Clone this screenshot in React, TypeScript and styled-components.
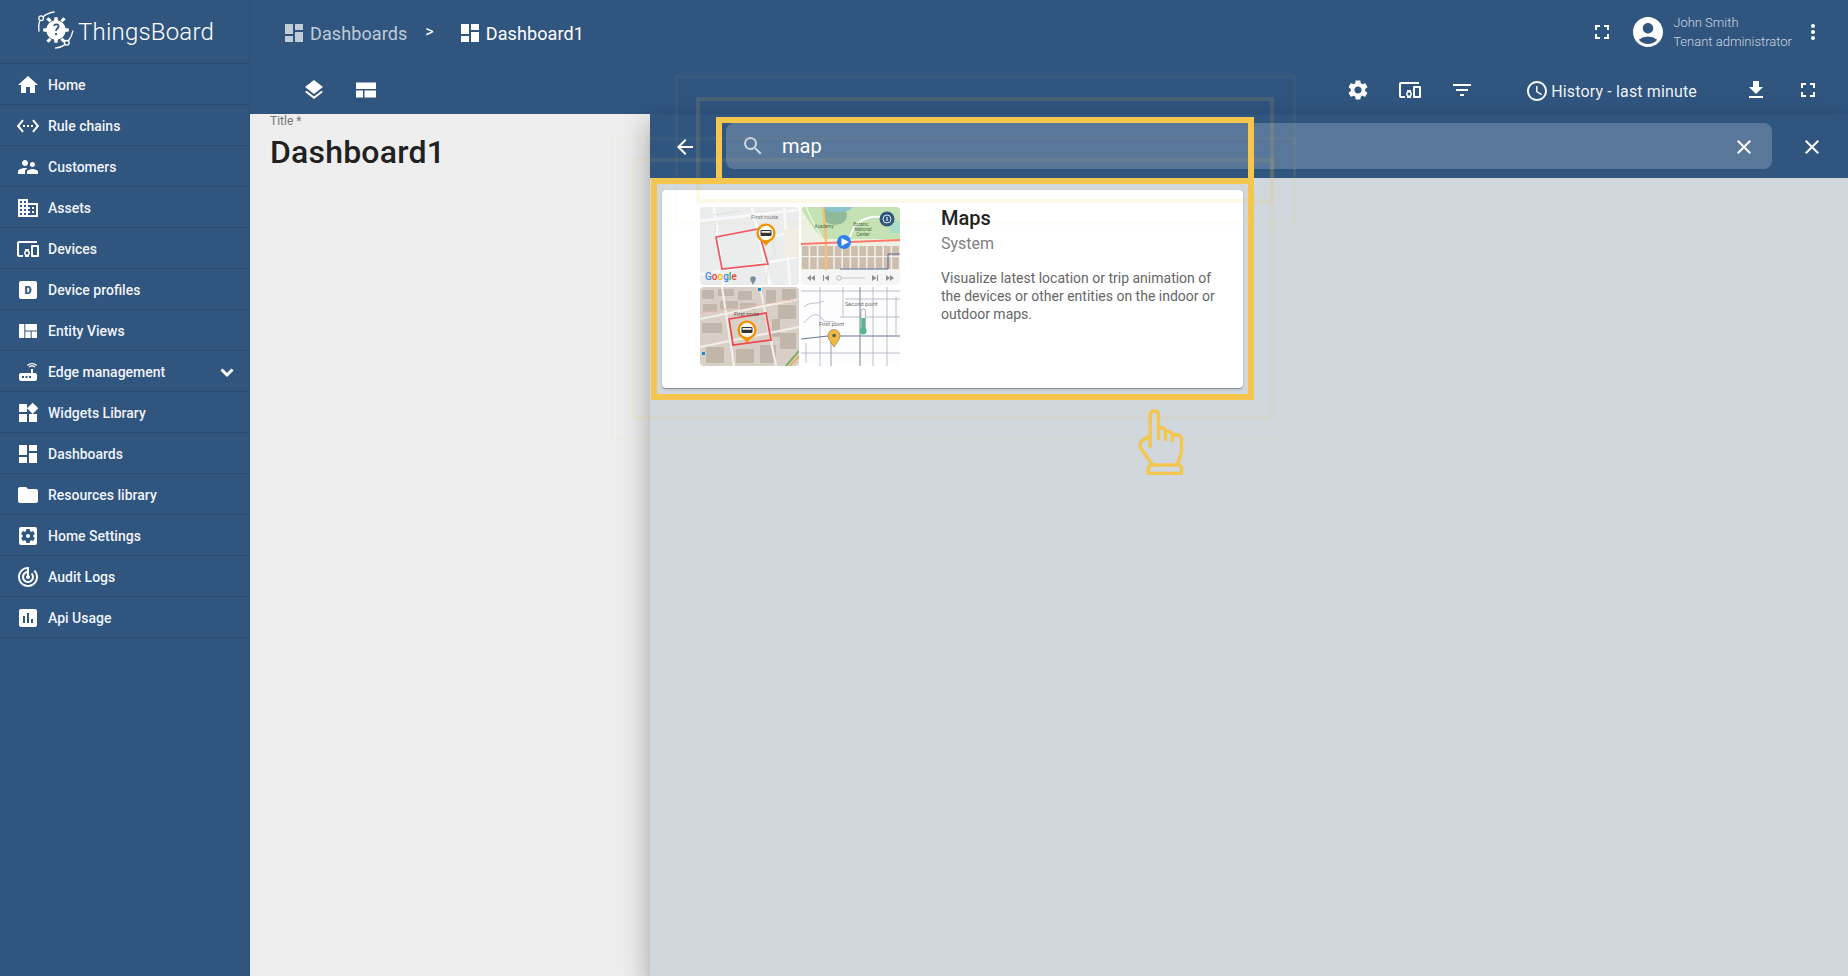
import React, { FC } from 'react';
import styled, { createGlobalStyle } from 'styled-components';
import {
  MdHome, MdSettingsEthernet, MdSupervisorAccount, MdDomain, MdDevicesOther, MdViewQuilt, MdRouter,
  MdWidgets, MdDashboard, MdFolder, MdSettingsApplications, MdTrackChanges, MdInsertChart,
  MdFullscreen, MdAccountCircle, MdMoreVert, MdLayers, MdSettings, MdFilterList, MdAccessTime,
  MdFileDownload, MdSearch, MdClose, MdArrowBack,
} from 'react-icons/md';

const primary = '#305680';
const yellow = '#f4c64d';

const GlobalStyle = createGlobalStyle`
  html, body {
    margin: 0;
    height: 100%;
    overflow: hidden;
    font-family: Roboto, "Helvetica Neue", sans-serif;
  }
`;

const LogoMark: FC = () => (
  <svg width="38" height="38" viewBox="0 0 37 37" fill="none" stroke="#fff" strokeWidth="1.3">
    <circle cx="4" cy="7" r="2.3" />
    <path d="M6 5.5 C9 3 13 1.5 17 1" />
    <path d="M2.6 9.5 C1.5 13 1.4 17 2 20" />
    <circle cx="29" cy="31" r="2.3" />
    <path d="M27 33 C24 35 21 36 17.5 36.2" />
    <path d="M30.6 29 C33 26 34.4 23 35 19" />
    <g fill="#fff" stroke="none">
      <circle cx="18.5" cy="18.5" r="9.5" />
      <path d="M17 6h3l.5 4h-4z M17 31h3l.5-4h-4z M6 17v3l4 .5v-4z M31 17v3l-4 .5v-4z M9 8l2.3-2 3 3-2.3 2z M28 29l-2.3 2-3-3 2.3-2z M28 8l-2.3-2-3 3 2.3 2z M9 29l2.3 2 3-3-2.3-2z" />
    </g>
    <path d="M16.5 14.5 C17 12.5 21 12.5 21 15 C21 17 18.5 17 18.5 19.5 M18.5 21.5v2" stroke={primary} strokeWidth="1.8" />
  </svg>
);

const LayoutIcon: FC = () => (
  <svg width="24" height="24" viewBox="0 0 24 24" fill="#fff">
    <rect x="2" y="4.5" width="20" height="6.5" />
    <rect x="2" y="12.5" width="7" height="7" />
    <rect x="10.5" y="12.5" width="11.5" height="7" />
  </svg>
);

const ChevronIcon: FC = () => (
  <svg width="24" height="24" viewBox="0 0 24 24" fill="none" stroke="#fff" strokeWidth="3">
    <path d="M6.5 9.5 L12 15 L17.5 9.5" />
  </svg>
);

const HandIcon: FC = () => (
  <svg width="46" height="67" viewBox="-1.5 -1.5 46 67" fill="none" stroke={yellow} strokeWidth="3.4" strokeLinecap="round" strokeLinejoin="round">
    <path d="M10.7 37 V5 A4.2 4.2 0 0 1 19 5 V29" />
    <path d="M19 19 C21 17 26 18 26 22 V30" />
    <path d="M26 23 C28 21 33 22 33 26 V31" />
    <path d="M33 26 C35 24 42 25 42 30 V42 L38 55" />
    <path d="M10.7 26 L3 31 C0 33 0 37 2 40 L13 55" />
    <path d="M11 55.5 H40 L42 58 V64 H9 V58 Z" />
  </svg>
);

// small bus glyph inside the orange map pins
const BusPin: FC<{ x: number; y: number }> = ({ x, y }) => (
  <g>
    <path d={`M${x - 4} ${y + 8} L${x} ${y + 13} L${x + 4} ${y + 8} Z`} fill="#f39200" />
    <circle cx={x} cy={y} r="8.4" fill="#fff" stroke="#f39200" strokeWidth="2.4" />
    <rect x={x - 5.5} y={y - 3} width="11" height="6" rx="1" fill="#333" />
    <rect x={x - 4.5} y={y - 2} width="9" height="1.8" fill="#eee" />
  </g>
);

const houses = Array.from({ length: 12 }, (_, i) => i);
const blocks3 = [
  [2, 83, 12, 9], [18, 82, 16, 7], [38, 84, 14, 9], [66, 83, 10, 14], [82, 82, 14, 11],
  [3, 97, 14, 8], [20, 94, 18, 8], [40, 96, 16, 7], [78, 98, 18, 14], [2, 116, 20, 10],
  [36, 142, 18, 14], [60, 138, 16, 18], [80, 126, 16, 16], [6, 140, 18, 16], [72, 112, 8, 18],
];

const MapsPreview: FC = () => (
  <svg width="200" height="159" viewBox="0 0 200 159" fontFamily="Roboto, sans-serif">
    <defs>
      <clipPath id="t1"><rect width="99" height="78" rx="4" /></clipPath>
      <clipPath id="t2"><rect x="101" width="99" height="78" rx="4" /></clipPath>
      <clipPath id="t3"><rect y="80" width="99" height="79" rx="4" /></clipPath>
      <clipPath id="t4"><rect x="101" y="80" width="99" height="79" rx="4" /></clipPath>
      <filter id="soft"><feGaussianBlur stdDeviation="0.35" /></filter>
    </defs>

    <g clipPath="url(#t1)">
      <rect width="99" height="78" fill="#ebecec" />
      <g filter="url(#soft)">
        <g stroke="#f9f9f9" strokeWidth="2.6" fill="none">
          <path d="M-2 14 L99 3" />
          <path d="M-2 68 L99 50" />
          <path d="M14 0 L24 78" />
          <path d="M52 0 L70 78" />
          <path d="M70 30 L99 24" />
          <path d="M84 0 L90 78" />
        </g>
        <rect x="84" y="22" width="15" height="28" fill="#f3ece2" />
        <g stroke="#cfcfcf" strokeWidth=".7" strokeDasharray="2 1" fill="none">
          <path d="M14 8 L40 4" />
          <path d="M68 62 L66 74" />
          <path d="M72 32 L76 48" />
          <path d="M15 14 L16 26" />
        </g>
      </g>
      <text x="51" y="12" fontSize="6" fill="#7c7c7c">First route</text>
      <path d="M16 30 L58 22 L68 57 L22 62 Z" fill="none" stroke="#f2555d" strokeWidth="1.7" />
      <BusPin x={66} y={26} />
      <text x="5" y="73" fontSize="10" fontWeight="500">
        <tspan fill="#4285f4">G</tspan><tspan fill="#ea4335">o</tspan><tspan fill="#fbbc05">o</tspan><tspan fill="#4285f4">g</tspan><tspan fill="#34a853">l</tspan><tspan fill="#ea4335">e</tspan>
      </text>
      <circle cx="53" cy="72" r="2.8" fill="#78909c" />
      <path d="M50.7 73.5 L53 78 L55.3 73.5 Z" fill="#78909c" />
    </g>

    <g clipPath="url(#t2)">
      <rect x="101" width="99" height="78" fill="#f5f5f5" />
      <rect x="101" width="99" height="63" fill="#eef0e4" />
      <g filter="url(#soft)">
        <path d="M101 0 H200 V32 H122 C116 24 106 12 101 0 Z" fill="#c4e2b4" />
        <path d="M124 2 C134 -2 148 1 147 9 C146 20 128 20 123 12 Z" fill="#8fb99a" />
        <path d="M122 0 H152 C150 6 134 6 128 4 Z" fill="#8ac4cf" />
        <path d="M190 14 H200 V26 H190 Z" fill="#a9dcc8" />
        <path d="M106 0 C112 14 118 24 124 34" stroke="#fff" strokeWidth="1" fill="none" />
        <g fill="#cdbdae">
          {houses.map(i => (
            <rect key={i} x={102 + i * 8.2} y="39" width="6.6" height="23" />
          ))}
        </g>
        <rect x="101" y="49" width="99" height="1.2" fill="#f2efe8" />
      </g>
      <path d="M150 30 C154 16 162 12 172 10 C178 9 184 10 186 14" stroke="#fff" strokeWidth="1.8" fill="none" />
      <path d="M123 0 C124 14 126 24 126 36 V63" stroke="#f6bf75" strokeWidth="2.4" fill="none" />
      <path d="M101 37 L200 33" stroke="#fb7a6b" strokeWidth="2" />
      <path d="M140 62 H188 V47 H200" stroke="#5b6d98" strokeWidth="1" fill="none" />
      <g fontSize="4.6" fill="#4d6a46" textAnchor="middle">
        <text x="124" y="21">Academy</text>
        <text x="161" y="19">Botanic</text>
        <text x="163" y="24">National</text>
        <text x="163" y="29">Center</text>
      </g>
      <circle cx="144" cy="35" r="7" fill="#2d7ff0" />
      <path d="M141.5 31 L149 35 L141.5 39 Z" fill="#fff" />
      <circle cx="187" cy="12" r="7.5" fill={primary} />
      <circle cx="187" cy="12" r="4" fill="none" stroke="#dfe6ee" strokeWidth="1" />
      <rect x="186.4" y="10" width="1.2" height="4" fill="#dfe6ee" />
      <g fill="#8a9096">
        <path d="M107 71 L111 68 V74 Z M111 71 L115 68 V74 Z" />
        <path d="M123 68 H124 V74 H123 Z M124.5 71 L129 68 V74 Z" />
        <path d="M172 68 L176.5 71 L172 74 Z M177 68 H178 V74 H177 Z" />
        <path d="M186 68 L190 71 L186 74 Z M190 68 L194 71 L190 74 Z" />
      </g>
      <circle cx="139" cy="71" r="2.3" fill="none" stroke="#a8adb2" strokeWidth=".8" />
      <path d="M141.5 71 H165" stroke="#b5babf" strokeWidth=".8" />
    </g>

    <g clipPath="url(#t3)">
      <rect y="80" width="99" height="79" fill="#d8d0c6" />
      <g filter="url(#soft)">
        <g fill="#c0b6aa">
          {blocks3.map(([x, y, w, h]) => (
            <rect key={`${x}-${y}`} x={x} y={y} width={w} height={h} rx="1" />
          ))}
        </g>
        <g stroke="#f2efeb" strokeWidth="2.2" fill="none">
          <path d="M0 112 L99 92" />
          <path d="M0 140 L99 120" />
          <path d="M22 80 L34 159" />
          <path d="M60 80 L76 159" />
        </g>
      </g>
      <path d="M0 106 L99 92" stroke="#eeb9ad" strokeWidth="1" strokeDasharray="3 1" />
      <path d="M29 112 L66 106 L71 133 L33 138 Z" fill="none" stroke="#f2454f" strokeWidth="1.7" />
      <BusPin x={47} y={123} />
      <rect x="58" y="81" width="3" height="3" fill="#0f8fe0" />
      <rect x="2" y="145" width="3" height="3" fill="#0f8fe0" />
      <path d="M86 159 L99 144" stroke="#7fae5e" strokeWidth="2" />
      <path d="M90 159 L99 149" stroke="#e3a948" strokeWidth="1.5" />
      <text x="34" y="109" fontSize="5.5" fill="#5e554c">First route</text>
    </g>

    <g clipPath="url(#t4)">
      <rect x="101" y="80" width="99" height="79" fill="#fdfdfe" />
      <g stroke="#a9aec6" strokeWidth=".8" fill="none" filter="url(#soft)">
        <path d="M101 84 H200" />
        <path d="M140 110 H200" />
        <path d="M101 146 H200" />
        <path d="M145 92 H200" />
        <path d="M120 80 V159" />
        <path d="M143 80 V110" />
        <path d="M173 80 V159" />
        <path d="M187 80 V159" />
        <path d="M196 90 V128" />
        <path d="M104 116 C110 108 118 104 122 112 C128 118 132 112 136 116" />
        <path d="M104 100 C110 94 116 98 124 94" />
        <path d="M106 136 V156" />
      </g>
      <path d="M101 132 L128 129 H200" stroke="#68778e" strokeWidth="1.1" fill="none" />
      <path d="M160 80 V159" stroke="#7b8496" strokeWidth="1" />
      <path d="M131 135 V159" stroke="#9aa0b4" strokeWidth="1" />
      <text x="145" y="99" fontSize="5.6" fill="#6a6a6a">Second point</text>
      <text x="119" y="119" fontSize="5.6" fill="#6a6a6a">First point</text>
      <rect x="161" y="102" width="4.4" height="22" rx="2.2" fill="#fff" stroke="#8a8f98" strokeWidth=".7" />
      <rect x="161.4" y="111" width="3.6" height="13" fill="#53b88b" />
      <circle cx="163.2" cy="124" r="3.4" fill="#53b88b" />
      <path d="M134 140 C130 134 128 132 128 128.5 A6 6 0 0 1 140 128.5 C140 132 138 134 134 140 Z" fill="#f0b93c" stroke="#5d5d5d" strokeWidth=".5" />
      <circle cx="134" cy="128.5" r="1.8" fill="#5a5a5a" />
    </g>
  </svg>
);

function LetterIcon({ children }: { children: React.ReactNode }) {
  return <LetterBox>{children}</LetterBox>;
}

const menu = [
  { label: 'Home', icon: <MdHome /> },
  { label: 'Rule chains', icon: <MdSettingsEthernet /> },
  { label: 'Customers', icon: <MdSupervisorAccount /> },
  { label: 'Assets', icon: <MdDomain /> },
  { label: 'Devices', icon: <MdDevicesOther /> },
  { label: 'Device profiles', icon: <LetterIcon>D</LetterIcon> },
  { label: 'Entity Views', icon: <MdViewQuilt /> },
  { label: 'Edge management', icon: <MdRouter />, arrow: true },
  { label: 'Widgets Library', icon: <MdWidgets /> },
  { label: 'Dashboards', icon: <MdDashboard /> },
  { label: 'Resources library', icon: <MdFolder /> },
  { label: 'Home Settings', icon: <MdSettingsApplications /> },
  { label: 'Audit Logs', icon: <MdTrackChanges /> },
  { label: 'Api Usage', icon: <MdInsertChart /> },
];

const App: FC = () => {
  return (
    <Wrapper>
      <GlobalStyle />
      <Sidebar>
        <LogoRow>
          <LogoMark />
          <LogoText>ThingsBoard</LogoText>
        </LogoRow>
        {menu.map(item => (
          <MenuRow key={item.label}>
            <MenuIcon>{item.icon}</MenuIcon>
            <MenuLabel>{item.label}</MenuLabel>
            {item.arrow && <MenuArrow><ChevronIcon /></MenuArrow>}
          </MenuRow>
        ))}
      </Sidebar>

      <Main>
        <TopBar>
          <Crumb $dim><MdDashboard />Dashboards</Crumb>
          <CrumbSep>&gt;</CrumbSep>
          <Crumb><MdDashboard />Dashboard1</Crumb>
          <TopRight>
            <IconBtn><MdFullscreen /></IconBtn>
            <Avatar><MdAccountCircle /></Avatar>
            <UserInfo>
              <UserName>John Smith</UserName>
              <UserName>Tenant administrator</UserName>
            </UserInfo>
            <MoreBtn><MdMoreVert /></MoreBtn>
          </TopRight>
        </TopBar>

        <ToolBar>
          <ToolLeft>
            <IconBtn><MdLayers /></IconBtn>
            <IconBtn><LayoutIcon /></IconBtn>
          </ToolLeft>
          <ToolRight>
            <IconBtn><MdSettings /></IconBtn>
            <IconBtn><MdDevicesOther /></IconBtn>
            <IconBtn><MdFilterList /></IconBtn>
            <History><MdAccessTime />History - last minute</History>
            <IconBtn><MdFileDownload /></IconBtn>
            <IconBtn><MdFullscreen /></IconBtn>
          </ToolRight>
        </ToolBar>

        <Body>
          <TitlePanel>
            <TitleLabel>Title *</TitleLabel>
            <TitleValue>Dashboard1</TitleValue>
          </TitlePanel>

          <WidgetPanel>
            <SearchBar>
              <SearchBtn><MdArrowBack /></SearchBtn>
              <SearchField>
                <SearchIcon><MdSearch /></SearchIcon>
                <SearchText>map</SearchText>
                <SearchBtn><MdClose /></SearchBtn>
              </SearchField>
              <SearchBtn><MdClose /></SearchBtn>
            </SearchBar>
            <Results>
              <Card>
                <CardImage><MapsPreview /></CardImage>
                <CardInfo>
                  <CardTitle>Maps</CardTitle>
                  <CardSource>System</CardSource>
                  <CardText>Visualize latest location or trip animation of the devices or other entities on the indoor or outdoor maps.</CardText>
                </CardInfo>
              </Card>
            </Results>
          </WidgetPanel>
        </Body>
      </Main>

      <Spot $x={675} $y={75} $w={621} $h={150} $line={3} $alpha={0.045} />
      <Spot $x={610} $y={137} $w={686} $h={304} $line={3} $alpha={0.045} />
      <Spot $x={696} $y={97} $w={578} $h={106} $line={4} $alpha={0.12} />
      <Spot $x={632} $y={158} $w={642} $h={262} $line={4} $alpha={0.09} />
      <Spot $x={716} $y={117} $w={538} $h={67} $line={6} $alpha={1} />
      <Spot $x={651} $y={178} $w={603} $h={222} $line={6} $alpha={1} />
      <Hand><HandIcon /></Hand>
    </Wrapper>
  );
};

const Wrapper = styled.div`
    position: relative;
    display: flex;
    width: 1848px;
    height: 976px;
    overflow: hidden;
    background: ${primary};
    color: #fff;
  `,
  Sidebar = styled.aside`
    flex: none;
    width: 250px;
    box-sizing: border-box;
    border-right: 1px solid rgba(0, 0, 0, 0.08);
    background: ${primary};
  `,
  LogoRow = styled.div`
    display: flex;
    align-items: center;
    height: 64px;
    box-sizing: border-box;
    padding: 0 0 4px 37px;
    border-bottom: 1px solid rgba(0, 0, 0, 0.12);
  `,
  LogoText = styled.span`
    margin: 4px 0 0 3px;
    font-size: 24px;
    font-weight: 300;
    letter-spacing: 0.2px;
  `,
  MenuRow = styled.div`
    display: flex;
    align-items: center;
    height: 41px;
    box-sizing: border-box;
    padding: 2px 16px 0;
    border-bottom: 1px solid rgba(0, 0, 0, 0.12);
  `,
  MenuIcon = styled.span`
    display: flex;
    align-items: center;
    justify-content: center;
    width: 24px;
    height: 24px;
    margin-right: 8px;
    font-size: 24px;
  `,
  LetterBox = styled.span`
    display: flex;
    align-items: center;
    justify-content: center;
    width: 18px;
    height: 18px;
    border-radius: 2px;
    background: #fff;
    color: ${primary};
    font-size: 11px;
    font-weight: 900;
  `,
  MenuLabel = styled.span`
    flex: 1;
    font-size: 14px;
    font-weight: 500;
    color: rgba(255, 255, 255, 0.95);
  `,
  MenuArrow = styled.span`
    display: flex;
    margin-right: -6px;
  `,
  Main = styled.div`
    flex: 1;
    display: flex;
    flex-direction: column;
    min-width: 0;
  `,
  TopBar = styled.header`
    display: flex;
    align-items: center;
    height: 64px;
    flex: none;
    box-sizing: border-box;
    padding: 2px 23px 0 32px;
  `,
  Crumb = styled.div<{ $dim?: boolean }>`
    display: flex;
    align-items: center;
    gap: 4px;
    font-size: 18px;
    letter-spacing: 0.1px;
    color: ${props => props.$dim ? 'rgba(255, 255, 255, 0.7)' : '#fff'};
    svg {
      width: 24px;
      height: 24px;
    }
  `,
  CrumbSep = styled.span`
    margin: -4px 24px 0 18px;
    font-size: 16px;
    color: #fff;
  `,
  TopRight = styled.div`
    display: flex;
    align-items: center;
    margin-left: auto;
    margin-top: -2px;
  `,
  IconBtn = styled.span`
    display: flex;
    align-items: center;
    justify-content: center;
    flex: none;
    width: 52px;
    height: 40px;
    font-size: 24px;
  `,
  SearchBtn = styled(IconBtn)`
    padding-top: 2px;
  `,
  Avatar = styled.span`
    display: flex;
    margin-left: 2px;
    font-size: 36px;
  `,
  UserInfo = styled.div`
    display: flex;
    flex-direction: column;
    gap: 2px;
    margin-left: 7px;
  `,
  UserName = styled.span`
    font-size: 13px;
    font-weight: 300;
    line-height: 17px;
    color: rgba(255, 255, 255, 0.75);
  `,
  MoreBtn = styled.span`
    display: flex;
    margin: 0 0 0 9px;
    font-size: 24px;
  `,
  ToolBar = styled.div`
    display: flex;
    align-items: center;
    height: 50px;
    flex: none;
    box-sizing: border-box;
    padding: 2px 14px 0 38px;
  `,
  ToolLeft = styled.div`
    display: flex;
    align-items: center;
  `,
  ToolRight = styled.div`
    display: flex;
    align-items: center;
    margin-left: auto;
  `,
  History = styled.div`
    display: flex;
    align-items: center;
    gap: 2px;
    margin: 2px 33px 0 37px;
    font-size: 16px;
    letter-spacing: 0.15px;
    color: rgba(255, 255, 255, 0.95);
    svg {
      width: 24px;
      height: 24px;
    }
  `,
  Body = styled.div`
    flex: 1;
    display: flex;
    min-height: 0;
  `,
  TitlePanel = styled.section`
    flex: none;
    width: 400px;
    box-sizing: border-box;
    padding: 0 20px;
    background: #eeeeee;
  `,
  TitleLabel = styled.div`
    font-size: 12px;
    line-height: 14px;
    color: #757575;
  `,
  TitleValue = styled.div`
    margin-top: 4px;
    font-size: 32px;
    font-weight: 500;
    line-height: 40px;
    letter-spacing: 0.2px;
    color: #212121;
  `,
  WidgetPanel = styled.section`
    flex: 1;
    display: flex;
    flex-direction: column;
    min-width: 0;
    background: #d0d7dd;
    box-shadow: 0 8px 10px -5px rgba(0, 0, 0, 0.2), 0 16px 24px 2px rgba(0, 0, 0, 0.14), 0 6px 30px 5px rgba(0, 0, 0, 0.12);
  `,
  SearchBar = styled.div`
    display: flex;
    align-items: center;
    height: 64px;
    flex: none;
    padding-left: 9px;
    background: ${primary};
  `,
  SearchField = styled.div`
    display: flex;
    align-items: center;
    width: 1046px;
    height: 46px;
    margin: 0 14px 0 15px;
    padding-right: 2px;
    box-sizing: border-box;
    border-radius: 8px;
    background: rgba(255, 255, 255, 0.2);
  `,
  SearchIcon = styled.span`
    display: flex;
    margin-left: 15px;
    font-size: 24px;
    color: rgba(255, 255, 255, 0.7);
  `,
  SearchText = styled.span`
    flex: 1;
    margin-left: 17px;
    font-size: 20px;
  `,
  Results = styled.div`
    flex: 1;
    padding: 12px 605px 0 12px;
  `,
  Card = styled.article`
    display: flex;
    height: 198px;
    box-sizing: border-box;
    padding: 17px 0 0 38px;
    border-radius: 4px;
    background: #fff;
    box-shadow: 0 2px 1px -1px rgba(0, 0, 0, 0.2), 0 1px 1px rgba(0, 0, 0, 0.14), 0 1px 3px rgba(0, 0, 0, 0.12);
  `,
  CardImage = styled.div`
    flex: none;
    width: 200px;
    height: 159px;
  `,
  CardInfo = styled.div`
    width: 282px;
    margin: -1px 0 0 41px;
  `,
  CardTitle = styled.div`
    font-size: 20px;
    font-weight: 500;
    line-height: 24px;
    color: #212121;
  `,
  CardSource = styled.div`
    margin-top: 3px;
    font-size: 16px;
    line-height: 22px;
    color: #808080;
  `,
  CardText = styled.p`
    margin: 14px 0 0;
    font-size: 14px;
    line-height: 18px;
    color: #666666;
  `,
  Spot = styled.div<{ $x: number; $y: number; $w: number; $h: number; $line: number; $alpha: number }>`
    position: absolute;
    left: ${props => props.$x}px;
    top: ${props => props.$y}px;
    width: ${props => props.$w}px;
    height: ${props => props.$h}px;
    box-sizing: border-box;
    border: ${props => props.$line}px solid rgba(244, 198, 77, ${props => props.$alpha});
    pointer-events: none;
  `,
  Hand = styled.div`
    position: absolute;
    left: 1138px;
    top: 408px;
    display: flex;
  `;

export default App;
